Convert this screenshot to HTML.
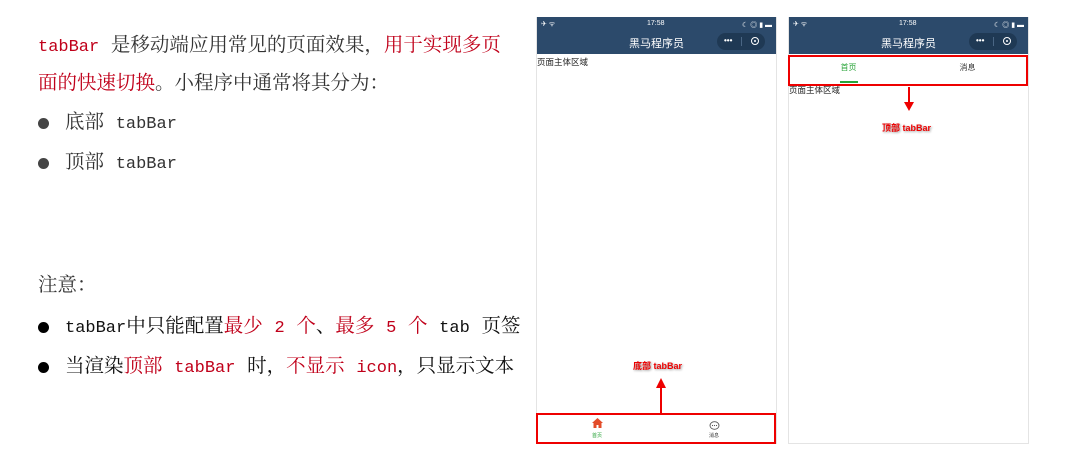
<!DOCTYPE html>
<html><head><meta charset="utf-8"><style>
body{margin:0;width:1068px;height:452px;background:#fff;position:relative;overflow:hidden;font-family:"Liberation Mono","Noto Serif CJK SC",serif;}
.t{position:absolute;font-size:19.5px;color:#333;white-space:nowrap;line-height:24px;}
.m{font-size:17px;}
.r{color:#c0001a;}
.dot{position:absolute;width:11px;height:11px;border-radius:50%;background:#333;}
.ph{position:absolute;top:17px;width:239px;height:426px;border:1px solid #e4e4e4;border-top:none;background:#fff;font-family:"Liberation Sans","Noto Sans CJK SC",sans-serif;}
.hd{position:absolute;left:0;top:0;width:100%;height:37px;background:#2c4a6b;color:#fff;}
.sb{position:absolute;top:3px;font-size:7px;}
.title{position:absolute;top:18px;width:100%;text-align:center;font-size:11px;}
.cap{position:absolute;right:11px;top:16px;width:48px;height:17px;border-radius:9px;background:#1f3954;}
.cap i{position:absolute;left:24px;top:4px;width:1px;height:9px;background:#4a6684;}
.cap b{position:absolute;left:7px;top:5px;font-size:8px;line-height:6px;}
.cap u{position:absolute;right:6px;top:4px;width:6px;height:6px;border:1.5px solid #fff;border-radius:50%;}
.cap u:after{content:"";position:absolute;left:2px;top:2px;width:2px;height:2px;background:#fff;border-radius:50%;}
.body{position:absolute;font-size:8.5px;color:#222;}
.box{position:absolute;border:2px solid #e00;}
.lbl{position:absolute;font-size:9px;font-weight:bold;color:#e00;text-shadow:1px 1px 2px #999;}
</style></head><body>
<div class="t" style="left:38px;top:34px"><span class="r m">tabBar</span> 是移动端应用常见的页面效果，<span class="r">用于实现多页</span></div>
<div class="t" style="left:38px;top:72px"><span class="r">面的快速切换</span>。小程序中通常将其分为：</div>
<div class="dot" style="left:38px;top:118px;background:#444"></div>
<div class="t" style="left:65px;top:111px">底部 <span class="m">tabBar</span></div>
<div class="dot" style="left:38px;top:158px;background:#444"></div>
<div class="t" style="left:65px;top:151px">顶部 <span class="m">tabBar</span></div>
<div class="t" style="left:38px;top:274px">注意：</div>
<div class="dot" style="left:38px;top:322px;background:#000"></div>
<div class="t" style="left:65px;top:315px;color:#111"><span class="m">tabBar</span>中只能配置<span class="r">最少 <span class="m">2</span> 个</span>、<span class="r">最多 <span class="m">5</span> 个</span> <span class="m">tab</span> 页签</div>
<div class="dot" style="left:38px;top:362px;background:#000"></div>
<div class="t" style="left:65px;top:355px;color:#111">当渲染<span class="r">顶部 <span class="m">tabBar</span></span> 时，<span class="r">不显示 <span class="m">icon</span></span>，只显示文本</div>

<div class="ph" style="left:536px">
 <div class="hd"><span class="sb" style="left:4px">✈ ᯤ</span><span class="sb" style="left:110px">17:58</span><span class="sb" style="right:4px">☾ ◎ ▮ ▬</span>
 <div class="title">黑马程序员</div><div class="cap"><b>•••</b><i></i><u></u></div></div>
 <div class="body" style="left:0;top:39px">页面主体区域</div>
 <div class="lbl" style="left:96px;top:342px">底部 tabBar</div>
 <div style="position:absolute;left:123px;top:370px;width:2px;height:26px;background:#e00"></div>
 <div style="position:absolute;left:119px;top:361px;width:0;height:0;border-left:5px solid transparent;border-right:5px solid transparent;border-bottom:10px solid #e00"></div>
 <div style="position:absolute;left:5px;top:401px;font-size:11px;color:#e0452a;width:110px;text-align:center">
  <svg width="11" height="10" viewBox="0 0 11 10"><path d="M5.5 0L0 5h1.5v5h3V7h2v3h3V5H11z" fill="#e34c2a"/></svg></div>
 <div style="position:absolute;left:5px;top:415px;font-size:5px;color:#2aa43a;width:110px;text-align:center">首页</div>
 <div style="position:absolute;left:122px;top:401px;width:110px;text-align:center"><svg width="11" height="10" viewBox="0 0 11 10"><ellipse cx="5.5" cy="4.5" rx="4.5" ry="3.8" fill="none" stroke="#555" stroke-width="0.9"/><circle cx="3.5" cy="4.5" r=".6" fill="#555"/><circle cx="5.5" cy="4.5" r=".6" fill="#555"/><circle cx="7.5" cy="4.5" r=".6" fill="#555"/></svg></div>
 <div style="position:absolute;left:122px;top:415px;font-size:5px;color:#333;width:110px;text-align:center">消息</div>
</div>
<div class="box" style="left:536px;top:413px;width:236px;height:27px"></div>

<div class="ph" style="left:788px">
 <div class="hd"><span class="sb" style="left:4px">✈ ᯤ</span><span class="sb" style="left:110px">17:58</span><span class="sb" style="right:4px">☾ ◎ ▮ ▬</span>
 <div class="title">黑马程序员</div><div class="cap"><b>•••</b><i></i><u></u></div></div>
 <div style="position:absolute;left:0;top:45px;width:119px;text-align:center;font-size:8px;color:#2aa43a">首页</div>
 <div style="position:absolute;left:51px;top:64px;width:18px;height:2px;background:#2aa43a"></div>
 <div style="position:absolute;left:119px;top:45px;width:119px;text-align:center;font-size:8px;color:#333">消息</div>
 <div class="body" style="left:0;top:67px">页面主体区域</div>
 <div style="position:absolute;left:119px;top:70px;width:2px;height:16px;background:#e00"></div>
 <div style="position:absolute;left:115px;top:85px;width:0;height:0;border-left:5px solid transparent;border-right:5px solid transparent;border-top:9px solid #e00"></div>
 <div class="lbl" style="left:93px;top:104px">顶部 tabBar</div>
</div>
<div class="box" style="left:788px;top:55px;width:236px;height:27px"></div>
</body></html>
